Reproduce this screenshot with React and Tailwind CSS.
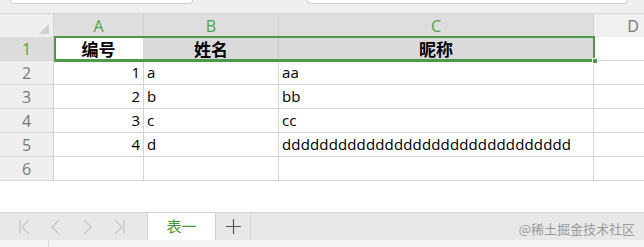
const cjk = { fontFamily: '"Noto Sans CJK SC", "Noto Sans", sans-serif' };
const latin = { fontFamily: '"Open Sans", "Noto Sans CJK SC", sans-serif' };

const cols = ['w-[54px]', 'w-[90px]', 'w-[135px]', 'w-[315px]', 'flex-1'];

const rows = [
  ['1', 'a', 'aa'],
  ['2', 'b', 'bb'],
  ['3', 'c', 'cc'],
  ['4', 'd', 'ddddddddddddddddddddddddddddddd'],
  ['', '', ''],
];

function NavIcon({ kind }) {
  const paths = {
    first: 'M2 1 V15 M11 1 L4 8 L11 15',
    prev: 'M9 1 L2 8 L9 15',
    next: 'M2 1 L9 8 L2 15',
    last: 'M1 1 L8 8 L1 15 M10 1 V15',
  };
  return (
    <svg width="12" height="16" viewBox="0 0 12 16" fill="none" stroke="#c4c4c4" strokeWidth="1.2">
      <path d={paths[kind]} />
    </svg>
  );
}

export default function App() {
  return (
    <div className="w-[644px] h-[247px] overflow-hidden bg-white flex flex-col" style={latin}>
      {/* top strip */}
      <div className="h-[14px] bg-[#efefef] flex items-start border-b border-[#d6d6d6]">
        <div className="ml-[10px] w-[183px] h-[4px] bg-white border-x border-b border-[#cfcfcf] rounded-b-[5px]" />
        <div className="ml-[114px] w-[321px] h-[4px] bg-white border-x border-b border-[#cfcfcf] rounded-b-[5px]" />
      </div>

      {/* column headers */}
      <div className="flex h-[23px] text-[16px] leading-none">
        <div className={`${cols[0]} bg-[#efefef] border-r border-[#d4d4d4] flex items-end justify-end pr-[4px] pb-[3px]`}>
          <div className="w-0 h-0 border-l-[10px] border-l-transparent border-b-[10px] border-b-[#cfcfcf]" />
        </div>
        {['A', 'B', 'C'].map((l, i) => (
          <div key={l} className={`${cols[i + 1]} bg-[#dedede] border-r border-[#d0d0d0] flex items-center justify-center text-[#4ea44a]`}>
            {l}
          </div>
        ))}
        <div className="flex-1 bg-[#f0f0f0] flex items-center justify-center text-[#777] pl-[28px]">D</div>
      </div>

      {/* row 1 */}
      <div className="relative flex h-[24px] border-b border-[#d4d4d4]">
        <div className={`${cols[0]} bg-[#dcdcdc] border-r border-[#d0d0d0] flex items-center justify-center text-[16px] text-[#4ea44a]`}>1</div>
        <div className={`${cols[1]} bg-white border-r border-[#d4d4d4] flex items-center justify-center font-bold text-[17px]`} style={cjk}>编号</div>
        <div className={`${cols[2]} bg-[#dadada] border-r border-[#c8c8c8] flex items-center justify-center font-bold text-[17px]`} style={cjk}>姓名</div>
        <div className={`${cols[3]} bg-[#dadada] border-r border-[#d4d4d4] flex items-center justify-center font-bold text-[17px]`} style={cjk}>昵称</div>
        <div className="flex-1" />
        <div className="absolute left-[54px] top-[-1px] w-[541px] h-[26px] border-2 border-b-[3px] border-[#4c9a48]" />
        <div className="absolute left-[592px] top-[21px] w-[6px] h-[6px] bg-[#4c9a48] border border-white" />
      </div>

      {/* data rows */}
      {rows.map((r, idx) => (
        <div key={idx} className="flex h-[24px] border-b border-[#d4d4d4] text-[15px] leading-none text-black">
          <div className={`${cols[0]} bg-[#efefef] border-r border-[#d0d0d0] flex items-center justify-center text-[16px] text-[#777]`}>{idx + 2}</div>
          <div className={`${cols[1]} border-r border-[#d4d4d4] flex items-center justify-end pr-[3px]`}>{r[0]}</div>
          <div className={`${cols[2]} border-r border-[#d4d4d4] flex items-center pl-[3px]`}>{r[1]}</div>
          <div className={`${cols[3]} border-r border-[#d4d4d4] flex items-center pl-[3px] whitespace-nowrap tracking-[0.15px]`}>{r[2]}</div>
          <div className="flex-1" />
        </div>
      ))}

      <div className="flex-1" />

      {/* sheet tab bar */}
      <div className="h-[28px] bg-[#e8e8e8] border-t border-[#d2d2d2] flex items-stretch">
        <div className="w-[148px] flex items-center pl-[18px] gap-[20px] border-r border-[#d2d2d2]">
          <NavIcon kind="first" />
          <NavIcon kind="prev" />
          <NavIcon kind="next" />
          <NavIcon kind="last" />
        </div>
        <div className="w-[67px] bg-white flex items-center justify-center text-[15px] text-[#3f9a38]" style={cjk}>表一</div>
        <div className="w-[36px] border-x border-[#d2d2d2] flex items-center justify-center">
          <svg width="15" height="15" viewBox="0 0 15 15" stroke="#555" strokeWidth="1.2">
            <path d="M7.5 0 V15 M0 7.5 H15" />
          </svg>
        </div>
        <div className="flex-1 flex items-end justify-end pr-[9px] pb-[2px] text-[13px] text-[#9a9a9a]" style={cjk}>
          @稀土掘金技术社区
        </div>
      </div>
      <div className="h-[7px] bg-[#f4f4f4] flex">
        <div className="w-[49px] border-r border-[#dcdcdc]" />
      </div>
    </div>
  );
}
